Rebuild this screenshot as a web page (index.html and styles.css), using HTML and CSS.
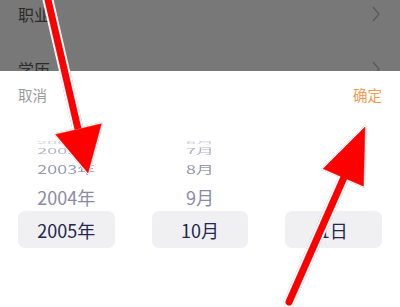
FILE: index.html
```html
<!DOCTYPE html>
<html lang="zh">
<head>
<meta charset="utf-8">
<title>Picker</title>
<link rel="stylesheet" href="styles.css">
</head>
<body>
<div class="page">
  <div class="backdrop">
    <div class="list">
      <div class="row"><span class="label">职业</span><svg class="chev" width="8" height="16" viewBox="0 0 8 16"><path d="M1 1 L7 8 L1 15" fill="none" stroke="#585858" stroke-width="1.2"/></svg></div>
      <div class="row"><span class="label">学历</span><svg class="chev" width="8" height="16" viewBox="0 0 8 16"><path d="M1 1 L7 8 L1 15" fill="none" stroke="#585858" stroke-width="1.2"/></svg></div>
    </div>
  </div>
  <div class="sheet">
    <div class="toolbar"><span class="cancel">取消</span><span class="ok">确定</span></div>
    <div class="wheels">
      <div class="wheel">
        <div class="item r4"><span>2001年</span></div>
        <div class="item r3"><span>2002年</span></div>
        <div class="item r2"><span>2003年</span></div>
        <div class="item r1"><span>2004年</span></div>
        <div class="item sel"><span>2005年</span></div>
      </div>
      <div class="wheel">
        <div class="item r4"><span>6月</span></div>
        <div class="item r3"><span>7月</span></div>
        <div class="item r2"><span>8月</span></div>
        <div class="item r1"><span>9月</span></div>
        <div class="item sel"><span>10月</span></div>
      </div>
      <div class="wheel">
        <div class="item r4"></div>
        <div class="item r3"></div>
        <div class="item r2"></div>
        <div class="item r1"></div>
        <div class="item sel"><span>1日</span></div>
      </div>
    </div>
  </div>
  <svg class="arrows" width="400" height="307" viewBox="0 0 400 307">
    <g class="outline" fill="#fff" stroke="#fff" stroke-width="3" stroke-linejoin="round">
      <line x1="45.7" y1="-10" x2="78" y2="129" stroke-width="11"/>
      <polygon points="101.4,123.8 88,173 55.6,134.4"/>
      <line x1="289" y1="302" x2="345" y2="175" stroke-width="11" stroke-linecap="round"/>
      <polygon points="363.5,186.2 365,127 323.1,168.8"/>
    </g>
    <g fill="#ff0000" stroke="#ff0000">
      <line x1="45.7" y1="-10" x2="78" y2="129" stroke-width="7"/>
      <polygon points="101.4,123.8 88,173 55.6,134.4" stroke-width="0.5"/>
      <line x1="289" y1="302" x2="345" y2="175" stroke-width="7" stroke-linecap="round"/>
      <polygon points="363.5,186.2 365,127 323.1,168.8" stroke-width="0.5"/>
    </g>
  </svg>
</div>
</body>
</html>
```

FILE: styles.css
```css
html, body {
  margin: 0;
  padding: 0;
}
body {
  font-family: "Noto Sans CJK SC", "Noto Sans", sans-serif;
  background: #fff;
}
.page {
  position: relative;
  width: 400px;
  height: 307px;
  overflow: hidden;
  background: #fff;
}
.backdrop {
  height: 71px;
  background: #787878;
  overflow: hidden;
}
.list {
  margin-top: -14px;
}
.row {
  height: 55px;
  display: flex;
  align-items: center;
  justify-content: space-between;
  padding: 0 20px 0 18px;
}
.label {
  font-size: 16px;
  line-height: 1;
  color: #2a2a2a;
}
.chev {
  display: block;
}
.toolbar {
  height: 48px;
  display: flex;
  align-items: center;
  justify-content: space-between;
  padding: 0 18px;
  font-size: 14.5px;
  line-height: 1;
}
.cancel {
  color: #9a9a9a;
}
.ok {
  color: #ef9a4f;
}
.wheels {
  display: grid;
  grid-template-columns: repeat(3, 1fr);
  column-gap: 37px;
  padding: 19px 18px 0 18px;
}
.wheel {
  display: flex;
  flex-direction: column;
}
.item {
  display: flex;
  align-items: center;
  justify-content: center;
  font-size: 18px;
  line-height: 1;
  overflow: visible;
}
.item span {
  display: inline-block;
}
.r4 {
  height: 8px;
  color: #cfcfda;
}
.r4 span {
  transform: scaleY(0.2);
}
.r3 {
  height: 10px;
  color: #b2b2c4;
}
.r3 span {
  transform: scaleY(0.42);
}
.r2 {
  height: 26px;
  color: #9898b0;
}
.r2 span {
  transform: scaleY(0.66);
}
.r1 {
  height: 29px;
  color: #8a8aa6;
}
.sel {
  height: 37px;
  background: #f0f0f2;
  border-radius: 7px;
  color: #26264e;
}
.arrows {
  position: absolute;
  left: 0;
  top: 0;
  pointer-events: none;
  filter: drop-shadow(0.8px 0.8px 0.6px rgba(0, 0, 0, 0.45));
}
```
